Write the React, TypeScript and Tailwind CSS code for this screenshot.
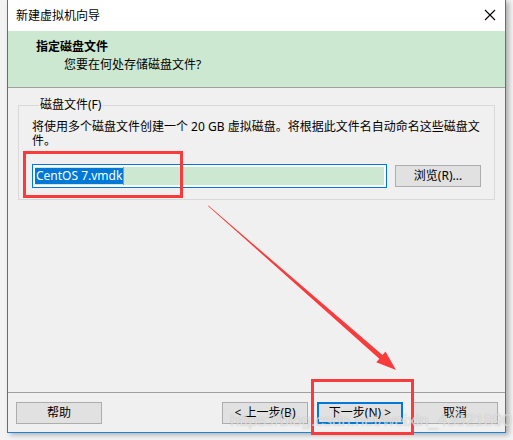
const ui = { fontFamily: '"Noto Sans", "Noto Sans CJK SC", sans-serif' };

function WinButton({ label, primary }: { label: string; primary?: boolean }) {
  return (
    <button
      className={`w-[86px] h-[22px] flex items-center justify-center text-[12px] leading-none text-black bg-[#e1e1e1] ${
        primary ? 'border-2 border-[#0078d7]' : 'border border-[#adadad]'
      }`}
    >
      {label}
    </button>
  );
}

export default function App() {
  return (
    <div className="relative w-[513px] h-[440px] overflow-hidden bg-[#f3f3f3]" style={ui}>
      {/* wizard window */}
      <div className="ml-[7px] w-[499px] h-[433px] flex flex-col border-x border-b border-[#1883d7] bg-[#f0f0f0] shadow-[3px_2px_5px_rgba(0,0,0,0.28)]">
        <div className="h-[31px] flex items-center justify-between bg-white pl-[8px] pr-[9px]">
          <span className="text-[12px] leading-[16px] text-black">新建虚拟机向导</span>
          <svg width="12" height="12" viewBox="0 0 12 12" className="mt-[-2px]">
            <path d="M1 1L11 11M11 1L1 11" stroke="#000" strokeWidth="1.1" />
          </svg>
        </div>

        <div className="h-[57px] bg-[#cce8d0] border-b border-[#a0a0a0] pt-[8px]">
          <div className="pl-[28px] text-[12px] leading-[16px] font-bold text-black">指定磁盘文件</div>
          <div className="pl-[56px] mt-[2px] text-[12px] leading-[16px] text-black">您要在何处存储磁盘文件?</div>
        </div>

        <div className="h-[304px] pt-[9px] pl-[10px] pr-[11px]">
          <fieldset className="border border-[#d9d9d9] px-[13px] pb-[11px]">
            <legend className="ml-[7px] px-[1px] text-[12px] leading-[16px] text-black">磁盘文件(F)</legend>
            <p className="mt-[7px] text-[12px] leading-[14px] text-black">
              将使用多个磁盘文件创建一个 20 GB 虚拟磁盘。将根据此文件名自动命名这些磁盘文
              <br />
              件。
            </p>
            <div className="mt-[16px] flex items-center">
              <div className="w-[355px] h-[24px] border border-[#0078d7] bg-white px-[2px] py-[2px] flex">
                <div className="flex-1 flex bg-[#cce8d0]">
                  <span className="my-[1px] px-[1px] flex items-center bg-[#0078d7] text-white text-[12px] leading-none">
                    CentOS 7.vmdk
                  </span>
                  <span className="w-[1px] bg-[#e8822f]" />
                </div>
              </div>
              <div className="ml-[8px]">
                <WinButton label="浏览(R)..." />
              </div>
            </div>
          </fieldset>
        </div>

        <div className="flex-1 border-t border-[#a0a0a0] pt-[9px] pl-[8px] pr-[7px] flex justify-between items-start">
          <WinButton label="帮助" />
          <div className="flex gap-[9px]">
            <WinButton label="< 上一步(B)" />
            <WinButton label="下一步(N) >" primary />
            <WinButton label="取消" />
          </div>
        </div>
      </div>

      {/* red annotations */}
      <div className="absolute left-[23px] top-[151px] w-[160px] h-[47px] border-[3px] border-[#f93b3b]" />
      <div className="absolute left-[311px] top-[379px] w-[103px] h-[56px] border-[3px] border-[#f93b3b]" />
      <svg className="absolute left-0 top-0" width="513" height="440" viewBox="0 0 513 440">
        <polygon
          points="208,206 379.3,358.8 376.3,362.2 396,370 385.5,351.6 382.5,355 208.4,205.6"
          fill="#f93b3b"
        />
      </svg>

      {/* watermark */}
      <div
        className="absolute left-[230px] top-[411px] text-[17px] leading-[20px] tracking-[-0.2px] text-white/60"
        style={{
          fontFamily: '"Liberation Sans", Arial, sans-serif',
          textShadow: '0 0 1px rgba(120,120,120,0.5)',
        }}
      >
        https://blog.csdn.net/weixin_43921890
      </div>
    </div>
  );
}
